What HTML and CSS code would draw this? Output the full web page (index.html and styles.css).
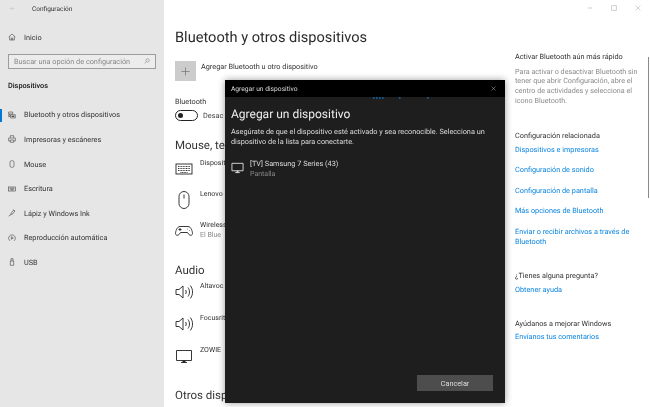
FILE: index.html
```html
<!DOCTYPE html>
<html lang="es">
<head>
<meta charset="utf-8">
<title>Configuración</title>
<link rel="stylesheet" href="styles.css">
</head>
<body>
<div class="window">
  <nav class="sidebar">
    <div class="appbar">
      <svg class="back" viewBox="0 0 10 10"><path d="M9 5H1.500M4.500 2L1.500 5l3 3" /></svg>
      <span>Configuración</span>
    </div>
    <div class="nav-item home">
      <svg class="nav-icon" viewBox="0 0 12 12"><path d="M1 6l5-4.500L11 6M2.500 5v5.500h7V5M5 10.500V7.500h2v3" /></svg>
      <span>Inicio</span>
    </div>
    <div class="search">
      <span>Buscar una opción de configuración</span>
      <svg class="search-icon" viewBox="0 0 10 10"><circle cx="6" cy="4" r="2.800"/><path d="M4 6L1 9"/></svg>
    </div>
    <div class="section-label">Dispositivos</div>
    <div class="nav-list">
      <div class="nav-item active">
        <svg class="nav-icon" viewBox="0 0 12 12"><path d="M1 1.500h6v3H1zM4 5.500h7v5H4zM1 5.500h2v3H1z" /><path class="fill" d="M5.500 7h4v2h-4z"/></svg>
        <span>Bluetooth y otros dispositivos</span>
      </div>
      <div class="nav-item">
        <svg class="nav-icon" viewBox="0 0 12 12"><path d="M3.500 4V1h5v3M3.500 9H1V4.500h10V9H8.500M3.500 7.500h5V11h-5z" /></svg>
        <span>Impresoras y escáneres</span>
      </div>
      <div class="nav-item">
        <svg class="nav-icon" viewBox="0 0 12 12"><rect x="3" y="1" width="6" height="10" rx="2.500"/></svg>
        <span>Mouse</span>
      </div>
      <div class="nav-item">
        <svg class="nav-icon" viewBox="0 0 12 12"><rect x="1" y="3" width="10" height="6"/><path d="M2.500 4.800h7M2.500 6.200h7M4 7.600h4"/></svg>
        <span>Escritura</span>
      </div>
      <div class="nav-item">
        <svg class="nav-icon" viewBox="0 0 12 12"><path d="M1 11c1-2 2-1 3-2s0-2 1-3l3-4 2 1.500-3 4c-1 1-2 0-3 1M8 1l2.500 2"/></svg>
        <span>Lápiz y Windows Ink</span>
      </div>
      <div class="nav-item">
        <svg class="nav-icon" viewBox="0 0 12 12"><path d="M3 10.300A5 5 0 1 1 9 10.300M5 4l3 2-3 2z"/></svg>
        <span>Reproducción automática</span>
      </div>
      <div class="nav-item">
        <svg class="nav-icon" viewBox="0 0 12 12"><path d="M3.500 4.500h5V11h-5zM4.500 4.500V1h3v3.500"/></svg>
        <span>USB</span>
      </div>
    </div>
  </nav>

  <main class="content">
    <h1>Bluetooth y otros dispositivos</h1>
    <div class="add-row">
      <div class="add-tile"><svg viewBox="0 0 10 10"><path d="M5 0.500v9M0.500 5h9"/></svg></div>
      <span>Agregar Bluetooth u otro dispositivo</span>
    </div>
    <div class="under-dialog">
      <div class="bt-label">Bluetooth</div>
      <div class="toggle-row">
        <span class="toggle"></span>
        <span>Desac</span>
      </div>
      <h2 class="first">Mouse, tec</h2>
      <div class="device">
        <svg viewBox="0 0 18 18"><rect x="1" y="4" width="16" height="10"/><path d="M3 6.500h12M3 8.500h12M3 10.500h12M5.500 12.500h7" stroke-dasharray="1 .6"/></svg>
        <span>Disposit</span>
      </div>
      <div class="device tall-gap">
        <svg viewBox="0 0 18 18"><rect x="4" y="0.500" width="10" height="17" rx="5"/><path d="M9 3.500v4"/></svg>
        <span>Lenovo</span>
      </div>
      <div class="device tall-gap">
        <svg viewBox="0 0 18 18"><path d="M5 4.500h8c3 0 4.500 5 4.500 7 0 2-2.500 2.500-4 .5l-1-1.500h-7l-1 1.500c-1.500 2-4 1.500-4-.5 0-2 1.500-7 4.500-7zM3.500 7.500h3M5 6v3M12 7h.5M14 8.500h.5"/></svg>
        <span>Wireless<small>El Blue</small></span>
      </div>
      <h2 class="audio">Audio</h2>
      <div class="device">
        <svg viewBox="0 0 18 18"><path d="M1 6.500h3L8 3v12l-4-3.500H1zM10.500 7c1 1.300 1 2.700 0 4M13 4.500c2 3 2 6 0 9M15.300 2.500c3 4 3 9 0 13"/></svg>
        <span>Altavoc</span>
      </div>
      <div class="device audio-gap">
        <svg viewBox="0 0 18 18"><path d="M1 6.500h3L8 3v12l-4-3.500H1zM10.500 7c1 1.300 1 2.700 0 4M13 4.500c2 3 2 6 0 9M15.300 2.500c3 4 3 9 0 13"/></svg>
        <span>Focusrit</span>
      </div>
      <div class="device audio-gap">
        <svg viewBox="0 0 18 18"><path d="M1.500 3.500h15v10h-15zM6 15.500h6" /><path class="fill" d="M7.500 13.500h3v2h-3z"/></svg>
        <span>ZOWIE</span>
      </div>
      <h2 class="others">Otros disp</h2>
    </div>
  </main>

  <aside class="help">
    <section class="help-first">
      <h3>Activar Bluetooth aún más rápido</h3>
      <p>Para activar o desactivar Bluetooth sin tener que abrir Configuración, abre el centro de actividades y selecciona el icono Bluetooth.</p>
    </section>
    <section class="help-related">
      <h3>Configuración relacionada</h3>
      <a>Dispositivos e impresoras</a>
      <a>Configuración de sonido</a>
      <a>Configuración de pantalla</a>
      <a>Más opciones de Bluetooth</a>
      <a>Enviar o recibir archivos a través de Bluetooth</a>
    </section>
    <section class="help-question">
      <h3>¿Tienes alguna pregunta?</h3>
      <a>Obtener ayuda</a>
    </section>
    <section class="help-improve">
      <h3>Ayúdanos a mejorar Windows</h3>
      <a>Envíanos tus comentarios</a>
    </section>
  </aside>

  <div class="controls">
    <svg viewBox="0 0 10 10"><path d="M1 5h8"/></svg>
    <svg viewBox="0 0 10 10"><path d="M1 1h8v8H1z"/></svg>
    <svg viewBox="0 0 10 10"><path d="M1 1l8 8M9 1l-8 8"/></svg>
  </div>
  <div class="scrollbar"></div>

  <div class="dialog">
    <header class="dialog-bar">
      <span>Agregar un dispositivo</span>
      <svg viewBox="0 0 10 10"><path d="M1 1l8 8M9 1l-8 8"/></svg>
    </header>
    <svg class="progress" viewBox="0 0 280 2"><path d="M148 1h1.500M151 1h1.500M154 1h1.500M157 1h1.500M174 1h1.500M202 1h1.500"/></svg>
    <div class="dialog-body">
      <h2>Agregar un dispositivo</h2>
      <p>Asegúrate de que el dispositivo esté activado y sea reconocible. Selecciona un dispositivo de la lista para conectarte.</p>
      <div class="dialog-device">
        <svg viewBox="0 0 14 14"><path d="M1 2.500h12v8H1zM4.500 12.500h5"/><path class="fill" d="M6 10.500h2v2H6z"/></svg>
        <span>[TV] Samsung 7 Series (43)<small>Pantalla</small></span>
      </div>
    </div>
    <footer class="dialog-foot"><button type="button">Cancelar</button></footer>
  </div>
</div>
</body>
</html>
```
FILE: styles.css
```css
* { box-sizing: border-box; }
html, body { margin: 0; height: 100%; overflow: hidden; }
body { background: #fff; font-family: Roboto, "Open Sans", sans-serif; font-size: 7px; color: #333; text-rendering: geometricPrecision; }
svg { fill: none; stroke: currentColor; stroke-width: 1; display: block; flex: none; }
svg .fill { fill: currentColor; stroke: none; }
h1, h2, h3, p { margin: 0; font-weight: 400; }

.window { position: relative; width: 650px; height: 407px; display: flex; overflow: hidden; filter: blur(.3px); will-change: transform; }

.sidebar { width: 164px; flex: none; background: #e6e6e6; padding-top: 3px; }
.appbar { display: flex; align-items: center; height: 11px; padding-left: 10px; gap: 17px; color: #333; font-size: 6.500px; }
.back { width: 5px; height: 5px; color: #bbb; }
.nav-item { display: flex; align-items: center; height: 24.600px; padding-left: 8px; gap: 8px; font-size: 7.300px; color: #333; }
.nav-icon { width: 8px; height: 8px; color: #444; stroke-width: .9; }
.home { margin-top: 11px; }
.search { margin: 4px 0 0 8px; width: 148px; height: 15px; border: 1px solid #9c9c9c; background: #ececec; display: flex; align-items: center; justify-content: space-between; padding: 0 5px; color: #888; font-size: 7.300px; }
.search-icon { width: 6px; height: 6px; color: #888; }
.section-label { margin: 11px 0 0 8px; font-size: 7.300px; font-weight: 500; color: #111; height: 11px; line-height: 11px; }
.nav-list { margin-top: 12px; }
.active { position: relative; }
.active::before { content: ""; position: absolute; left: 0; top: 6px; width: 2px; height: 13px; background: #0078d7; }

.content { width: 340px; flex: none; padding: 27px 0 0 11px; color: #333; }
h1 { font-size: 14.600px; line-height: 20px; color: #2b2b2b; }
.add-row { display: flex; align-items: flex-start; gap: 5px; margin-top: 14px; font-size: 7.300px; color: #333; }
.add-row span { line-height: 11px; }
.add-tile { width: 21px; height: 20px; background: #ccc; display: flex; align-items: center; justify-content: center; color: #666; }
.add-tile svg { width: 9px; height: 9px; stroke-width: .7; }
.under-dialog { white-space: nowrap; }
.bt-label { margin-top: 16px; font-size: 7.300px; line-height: 10px; color: #333; }
.toggle-row { display: flex; align-items: center; gap: 5px; margin-top: 3px; font-size: 7.300px; color: #444; line-height: 11px; }
.toggle { width: 23px; height: 11px; border: 1px solid #222; border-radius: 6px; position: relative; flex: none; }
.toggle::after { content: ""; position: absolute; left: 2px; top: 2px; width: 5px; height: 5px; border-radius: 50%; background: #222; }
h2 { font-size: 11.500px; line-height: 14px; color: #333; }
.first { margin-top: 17px; }
.device { display: flex; gap: 7px; align-items: flex-start; font-size: 7px; line-height: 10px; color: #333; margin-top: 6px; }
.device svg { width: 18px; height: 18px; color: #222; margin-top: 2px; stroke-width: .9; }
.device small, .dialog-device small { display: block; font-size: 7px; color: #888; line-height: 10px; }
.device.tall-gap { margin-top: 11px; }
.audio { margin-top: 23px; }
.audio + .device { margin-top: 4px; }
.device.audio-gap { margin-top: 12px; }
.others { margin-top: 23px; }

.help { flex: 1; padding: 52px 0 0 11px; font-size: 7px; line-height: 10px; min-width: 0; }
.help section { width: 125px; }
.help h3 { font-size: 7.300px; line-height: 10px; color: #333; }
.help p { margin-top: 4.500px; color: #8a8a8a; font-size: 7.200px; line-height: 9.700px; }
.help a { display: block; color: #0a84e0; font-size: 7.300px; line-height: 9.700px; margin-top: 10.800px; }
.help h3 + a { margin-top: 3.500px; }
.help-related { margin-top: 26px; }
.help-question { margin-top: 25px; }
.help-improve { margin-top: 24.500px; }

.controls { position: absolute; top: 5px; right: 9px; display: flex; gap: 18px; color: #999; }
.controls svg { width: 6px; height: 6px; stroke-width: .8; }
.scrollbar { position: absolute; right: 1px; top: 57px; width: 1px; height: 141px; background: #8a8a8a; }

.dialog { position: absolute; left: 225px; top: 80px; width: 280px; height: 323px; background: #1e1e1e; color: #fff; display: flex; flex-direction: column; box-shadow: 0 0 7px rgba(0,0,0,.4); }
.dialog-bar { height: 17px; flex: none; background: #000; display: flex; align-items: center; justify-content: space-between; padding: 0 9px 0 6px; font-size: 6.700px; color: #ddd; }
.dialog-bar svg { width: 5px; height: 5px; color: #ccc; stroke-width: .9; }
.progress { width: 280px; height: 2px; color: #0a6fc0; stroke-width: 1.500; flex: none; }
.dialog-body { flex: 1; padding: 7px 6px 0; }
.dialog-body h2 { font-size: 12px; line-height: 16px; color: #eee; }
.dialog-body p { margin-top: 5px; font-size: 7.300px; line-height: 10px; color: #ddd; }
.dialog-device { display: flex; gap: 6px; margin-top: 12px; font-size: 7.300px; line-height: 10px; color: #ddd; }
.dialog-device svg { width: 13px; height: 13px; margin-top: 2px; color: #ddd; }
.dialog-device small { color: #888; font-size: 7px; }
.dialog-foot { display: flex; justify-content: flex-end; padding: 0 12px 12px; }
.dialog-foot button { width: 76px; height: 16px; background: #4d4d4d; border: 0; padding: 0; font: inherit; font-size: 7.300px; color: #ddd; }
```
